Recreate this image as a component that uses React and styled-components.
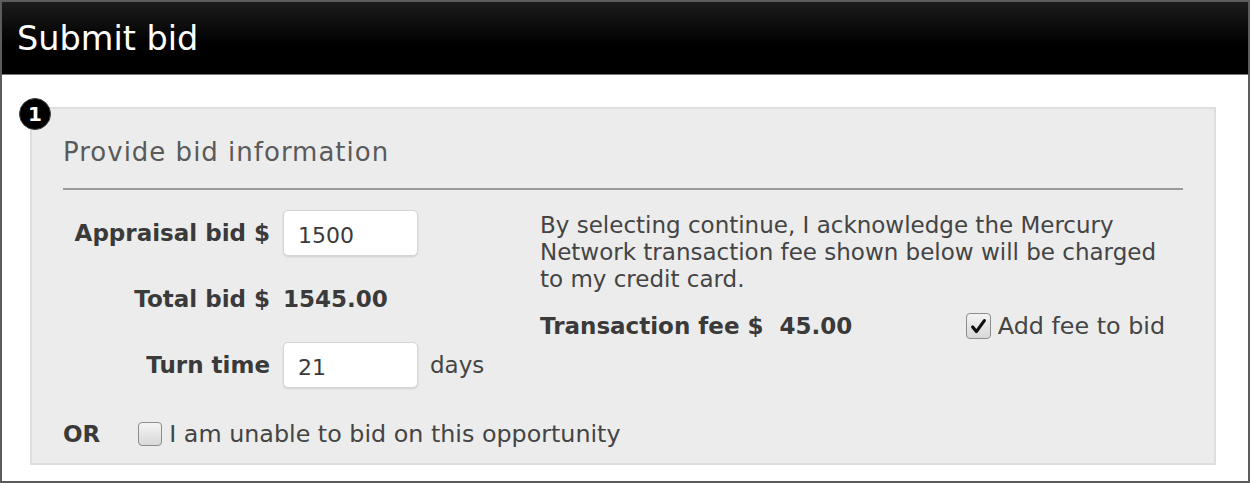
import React from 'react';
import styled, { createGlobalStyle } from 'styled-components';

const GlobalStyle = createGlobalStyle`
  body {
    margin: 0;
    background: #fff;
    font-family: "DejaVu Sans", Verdana, sans-serif;
  }
`;

const CheckBox = ({ checked }) => (
  <Box $checked={checked}>
    {checked && (
      <svg width="17" height="17" viewBox="0 0 16 16">
        <path d="M2.5 8.5 L6 12.8 L13.5 2.5" fill="none" stroke="#111" strokeWidth="3" strokeLinecap="round" strokeLinejoin="round" />
      </svg>
    )}
  </Box>
);

const App = () => {
  return (
    <Frame>
      <GlobalStyle />
      <Header>Submit bid</Header>
      <Body>
        <Section>
          <Badge>1</Badge>
          <Title>Provide bid information</Title>
          <Rule />
          <Columns>
            <FormGrid>
              <Label>Appraisal bid $</Label>
              <Field>
                <Input defaultValue="1500" />
              </Field>
              <Label>Total bid $</Label>
              <Field>
                <Value>1545.00</Value>
              </Field>
              <Label>Turn time</Label>
              <Field>
                <Input defaultValue="21" />
                <Unit>days</Unit>
              </Field>
            </FormGrid>
            <Notice>
              <Text>
                By selecting continue, I acknowledge the Mercury Network transaction fee shown below will be charged to my credit card.
              </Text>
              <FeeRow>
                <Strong>Transaction fee $&nbsp; 45.00</Strong>
                <CheckLabel>
                  <CheckBox checked />
                  Add fee to bid
                </CheckLabel>
              </FeeRow>
            </Notice>
          </Columns>
          <OrRow>
            <Strong>OR</Strong>
            <CheckLabel>
              <CheckBox />
              I am unable to bid on this opportunity
            </CheckLabel>
          </OrRow>
        </Section>
      </Body>
    </Frame>
  );
};

export default App;

const Frame = styled.div`
  width: 1250px;
  height: 483px;
  box-sizing: border-box;
  border: 2px solid #5c5c5c;
  display: flex;
  flex-direction: column;
  color: #3a3a3a;
`;

const Header = styled.div`
  height: 72px;
  flex-shrink: 0;
  display: flex;
  align-items: center;
  padding-left: 15px;
  background: linear-gradient(#1c1c1c, #000 60%);
  border-bottom: 1px solid #7a7a7a;
  color: #fff;
  font-size: 33.5px;
`;

const Body = styled.div`
  flex: 1;
  padding: 32px 32px 16px 28px;
  display: flex;
`;

const Section = styled.div`
  position: relative;
  flex: 1;
  background: #ececec;
  border: 2px solid #dedede;
  padding: 26px 31px 0 31px;
`;

const Badge = styled.div`
  position: absolute;
  top: -11px;
  left: -13px;
  width: 32px;
  height: 32px;
  box-sizing: border-box;
  border-radius: 50%;
  background: #000;
  border: 1px solid #444;
  color: #fff;
  font-weight: bold;
  font-size: 20px;
  display: flex;
  align-items: center;
  justify-content: center;
`;

const Title = styled.div`
  font-size: 26px;
  letter-spacing: 1px;
  color: #5a5a5a;
  line-height: 34px;
`;

const Rule = styled.div`
  height: 2px;
  background: #9a9a9a;
  margin: 19px 0 20px;
`;

const Columns = styled.div`
  display: flex;
  gap: 60px;
`;

const FormGrid = styled.div`
  display: grid;
  grid-template-columns: 207px auto;
  column-gap: 13px;
  row-gap: 20px;
  align-items: center;
  width: 417px;
`;

const Label = styled.div`
  text-align: right;
  font-weight: bold;
  font-size: 23px;
  white-space: nowrap;
  color: #3a3a3a;
`;

const Field = styled.div`
  display: flex;
  align-items: center;
  gap: 12px;
  min-height: 46px;
`;

const Input = styled.input`
  width: 135px;
  height: 46px;
  box-sizing: border-box;
  border: 1px solid #d6d6d6;
  border-radius: 5px;
  background: #fff;
  box-shadow: 0 1px 2px rgba(0, 0, 0, 0.12);
  padding: 4px 14px 0;
  font-family: inherit;
  font-size: 22px;
  color: #3a3a3a;
  outline: none;
`;

const Value = styled.span`
  font-weight: bold;
  font-size: 23px;
`;

const Unit = styled.span`
  font-size: 23px;
  color: #444;
`;

const Notice = styled.div`
  flex: 1;
  display: flex;
  flex-direction: column;
  gap: 19px;
  padding-top: 2px;
`;

const Text = styled.div`
  font-size: 23px;
  line-height: 27px;
  color: #444;
`;

const FeeRow = styled.div`
  display: flex;
  align-items: center;
  justify-content: space-between;
  padding-right: 18px;
`;

const Strong = styled.span`
  font-weight: bold;
  font-size: 23px;
  color: #3a3a3a;
`;

const CheckLabel = styled.label`
  display: flex;
  align-items: center;
  gap: 7px;
  font-size: 23.8px;
  color: #444;
`;

const Box = styled.span`
  width: ${(p) => (p.$checked ? '25px' : '24px')};
  height: ${(p) => (p.$checked ? '26px' : '24px')};
  box-sizing: border-box;
  border: 1px solid #8d8d8d;
  border-radius: 4px;
  background: linear-gradient(#f4f4f4, #d8d8d8);
  display: flex;
  align-items: center;
  justify-content: center;
`;

const OrRow = styled.div`
  display: flex;
  align-items: center;
  gap: 38px;
  margin-top: 32px;
`;
